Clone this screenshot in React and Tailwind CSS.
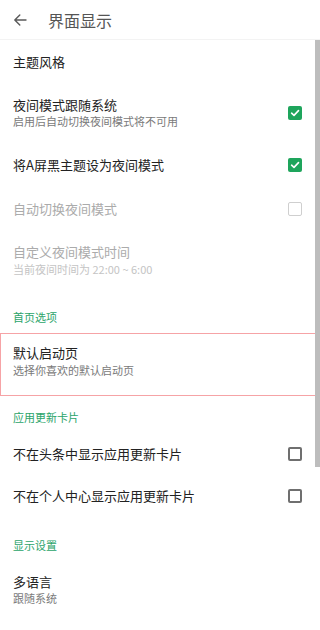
const font = { fontFamily: '"Noto Sans CJK SC", "Noto Sans", sans-serif' };

function Check({ state }) {
  if (state === 'on') {
    return (
      <div className="w-[14px] h-[14px] rounded-[2px] bg-[#1ea55c] flex items-center justify-center">
        <svg width="10" height="10" viewBox="0 0 10 10">
          <path d="M1.6 5.2 L4 7.4 L8.5 2.6" fill="none" stroke="#fff" strokeWidth="1.6" strokeLinecap="round" strokeLinejoin="round" />
        </svg>
      </div>
    );
  }
  if (state === 'disabled') {
    return <div className="w-[14px] h-[14px] rounded-[2px] border-[1.5px] border-[#cfcfcf]" />;
  }
  return <div className="w-[14px] h-[14px] rounded-[2px] border-2 border-[#6f6f6f]" />;
}

function Row({ title, sub, check, disabled, h, gap = 'mt-[2px]' }) {
  return (
    <div className={`flex items-center pl-[13px] pr-[18px] ${h}`}>
      <div className="flex-1 flex flex-col">
        <div className={`text-[13px] leading-[14px] ${disabled ? 'text-[#ababab]' : 'text-[#222]'}`}>{title}</div>
        {sub && (
          <div className={`text-[11px] leading-[14px] ${gap} ${disabled ? 'text-[#c4c4c4]' : 'text-[#7a7a7a]'}`}>{sub}</div>
        )}
      </div>
      {check && <Check state={check} />}
    </div>
  );
}

function Section({ label, h, pt }) {
  return (
    <div className={`pl-[13px] ${h} ${pt} text-[11px] leading-[14px] text-[#2ba46a]`}>{label}</div>
  );
}

export default function App() {
  return (
    <div className="relative w-[320px] h-[630px] bg-white overflow-hidden" style={font}>
      <div className="h-10 flex items-center border-b border-[#f3f3f3]">
        <div className="w-12 flex items-center justify-center pr-[8px]">
          <svg width="14" height="14" viewBox="0 0 14 14">
            <path d="M13 7 H2 M6.8 2 L1.8 7 L6.8 12" fill="none" stroke="#5a5a5a" strokeWidth="1.4" strokeLinecap="round" strokeLinejoin="round" />
          </svg>
        </div>
        <div className="text-[16px] text-[#555]">界面显示</div>
      </div>

      <Row title="主题风格" h="h-[43px]" />
      <Row title="夜间模式跟随系统" sub="启用后自动切换夜间模式将不可用" check="on" h="h-[60px]" />
      <Row title="将A屏黑主题设为夜间模式" check="on" h="h-[44px]" />
      <Row title="自动切换夜间模式" check="disabled" disabled h="h-[43px]" />
      <Row title="自定义夜间模式时间" sub="当前夜间时间为 22:00 ~ 6:00" disabled gap="mt-[3px]" h="h-[61px]" />

      <Section label="首页选项" h="h-[42px]" pt="pt-[19px]" />
      <div className="h-[63px] border border-[#f6a3a6] pt-[11px] pl-[12px]">
        <div className="text-[13px] leading-[15px] text-[#222]">默认启动页</div>
        <div className="text-[11px] leading-[14px] mt-[3px] text-[#7a7a7a]">选择你喜欢的默认启动页</div>
      </div>

      <Section label="应用更新卡片" h="h-[37px]" pt="pt-[14px]" />
      <Row title="不在头条中显示应用更新卡片" check="off" h="h-[42px]" />
      <Row title="不在个人中心显示应用更新卡片" check="off" h="h-[42px]" />

      <Section label="显示设置" h="h-[43px]" pt="pt-[21px]" />
      <div className="pl-[13px] pt-[14px]">
        <div className="text-[13px] leading-[15px] text-[#222]">多语言</div>
        <div className="text-[11px] leading-[14px] mt-[2px] text-[#7a7a7a]">跟随系统</div>
      </div>

      <div className="absolute right-0 top-[40px] w-[5px] h-[427px] bg-[#bdbdbd]" />
    </div>
  );
}
